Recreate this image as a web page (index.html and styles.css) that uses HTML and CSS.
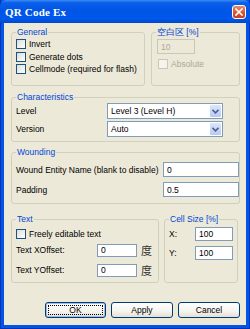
FILE: index.html
```html
<!DOCTYPE html>
<html>

<head>
    <title>QR Code Ex</title>
    <link rel="stylesheet" href="styles.css">
</head>

<body>
    <div class="window">
        <div class="titlebar">
            <span class="title">QR Code Ex</span>
            <span class="close">
                <svg width="8" height="8" viewBox="0 0 8 8">
                    <path d="M1 1L7 7M7 1L1 7" stroke="#fff" stroke-width="1.6" stroke-linecap="square" />
                </svg>
            </span>
        </div>

        <div class="client">
            <div class="row-top">
                <fieldset class="group general">
                    <legend>General</legend>
                    <label class="check"><span class="box"></span>Invert</label>
                    <label class="check"><span class="box"></span>Generate dots</label>
                    <label class="check"><span class="box"></span>Cellmode (required for flash)</label>
                </fieldset>

                <fieldset class="group margin">
                    <legend>空白区 [%]</legend>
                    <input class="field field-disabled" type="text" value="10" disabled>
                    <label class="check check-disabled"><span class="box"></span>Absolute</label>
                </fieldset>
            </div>

            <fieldset class="group chars">
                <legend>Characteristics</legend>
                <span class="lbl">Level</span>
                <div class="select">
                    <span>Level 3 (Level H)</span>
                    <span class="arrow"><svg width="7" height="5" viewBox="0 0 7 5"><path d="M0.5 0.8L3.5 3.8L6.5 0.8" fill="none" stroke="#4D6185" stroke-width="1.6" /></svg></span>
                </div>
                <span class="lbl">Version</span>
                <div class="select">
                    <span>Auto</span>
                    <span class="arrow"><svg width="7" height="5" viewBox="0 0 7 5"><path d="M0.5 0.8L3.5 3.8L6.5 0.8" fill="none" stroke="#4D6185" stroke-width="1.6" /></svg></span>
                </div>
            </fieldset>

            <fieldset class="group wounding">
                <legend>Wounding</legend>
                <span class="lbl">Wound Entity Name (blank to disable)</span>
                <input class="field" type="text" value="0">
                <span class="lbl">Padding</span>
                <input class="field" type="text" value="0.5">
            </fieldset>

            <div class="row-bottom">
                <fieldset class="group text">
                    <legend>Text</legend>
                    <label class="check"><span class="box"></span>Freely editable text</label>
                    <div class="offsets">
                        <span class="lbl">Text XOffset:</span>
                        <input class="field" type="text" value="0">
                        <span class="unit">度</span>
                        <span class="lbl">Text YOffset:</span>
                        <input class="field" type="text" value="0">
                        <span class="unit">度</span>
                    </div>
                </fieldset>

                <fieldset class="group cell">
                    <legend>Cell Size [%]</legend>
                    <span class="lbl">X:</span>
                    <input class="field" type="text" value="100">
                    <span class="lbl">Y:</span>
                    <input class="field" type="text" value="100">
                </fieldset>
            </div>

            <div class="buttons">
                <button class="btn btn-default">OK</button>
                <button class="btn">Apply</button>
                <button class="btn">Cancel</button>
            </div>
        </div>
    </div>
</body>

</html>
```

FILE: styles.css
```css
body {
    margin: 0;
    font-family: "Liberation Sans", Arial, sans-serif;
    font-size: 8.5px;
    background: #fff;
}

.window {
    width: 250px;
    height: 329px;
    box-sizing: border-box;
    background: #0055E5;
    border: 1px solid #0831B5;
    border-top: none;
    display: flex;
    flex-direction: column;
}

.titlebar {
    height: 23px;
    margin: 0 -1px;
    display: flex;
    align-items: center;
    justify-content: space-between;
    padding: 0 4px 0 5px;
    background: linear-gradient(to bottom, #3D8CF5 0, #0A5FEA 12%, #0055E5 45%, #0058EC 80%, #0048D0 100%);
    border-radius: 6px 6px 0 0;
}

.title {
    font-family: "Liberation Serif", "Times New Roman", serif;
    font-weight: bold;
    font-size: 11px;
    color: #fff;
    letter-spacing: 0.2px;
}

.close {
    width: 14px;
    height: 14px;
    box-sizing: border-box;
    display: flex;
    align-items: center;
    justify-content: center;
    background: linear-gradient(to bottom, #E98A6C, #D9512B 60%, #C94020);
    border: 1px solid #fff;
    border-radius: 3px;
}

.client {
    flex: 1;
    margin: 0 3px 3px;
    background: #ECE9D8;
    padding: 4px 6px 0 7px;
    display: flex;
    flex-direction: column;
}

.group {
    margin: 0;
    padding: 0 4px 0 4px;
    border: 1px solid #D0D0BF;
    border-radius: 3px;
    min-width: 0;
    box-sizing: border-box;
}

.group legend {
    padding: 0 1px;
    color: #0046D5;
    line-height: 11px;
}

.lbl {
    color: #000;
    white-space: nowrap;
}

.check {
    display: flex;
    align-items: center;
    height: 12.5px;
    white-space: nowrap;
}

.box {
    width: 10px;
    height: 10px;
    box-sizing: border-box;
    border: 1px solid #1C5180;
    background: linear-gradient(135deg, #DCDCD7, #fff);
    margin-right: 3px;
    flex-shrink: 0;
}

.check-disabled {
    color: #ACA899;
}

.check-disabled .box {
    border-color: #CAC8BB;
    background: #F5F4EA;
}

.field {
    margin: 0;
    box-sizing: border-box;
    border: 1px solid #7F9DB9;
    background: #fff;
    font-family: inherit;
    font-size: 8.5px;
    color: #000;
    padding: 0 3px;
    height: 15px;
    outline: none;
}

.field-disabled {
    background: #ECE9D8;
    border-color: #C9C7BA;
    color: #ACA899;
}

/* top row */
.row-top {
    display: flex;
    gap: 6px;
}

.general {
    width: 134px;
    height: 59px;
}

.margin {
    width: 89px;
    height: 59px;
    display: flex;
    flex-direction: column;
}

.margin .field {
    width: 38px;
    margin-top: 1px;
    margin-left: 1px;
}

.margin .check {
    margin-top: 4px;
    margin-left: 2px;
}

/* characteristics */
.chars {
    margin-top: 6px;
    height: 50px;
    display: grid;
    grid-template-columns: 91px 116px;
    grid-auto-rows: 16px;
    row-gap: 2px;
    align-items: center;
}

.select {
    height: 16px;
    box-sizing: border-box;
    border: 1px solid #7F9DB9;
    background: #fff;
    display: flex;
    align-items: center;
    justify-content: space-between;
    padding-left: 3px;
}

.arrow {
    width: 11px;
    height: 12px;
    margin-right: 1px;
    display: flex;
    align-items: center;
    justify-content: center;
    background: linear-gradient(to bottom, #DCE6FD, #B7CAF5);
    border-radius: 1px;
}

/* wounding */
.wounding {
    margin-top: 5px;
    height: 57px;
    display: grid;
    grid-template-columns: 147px 76px;
    grid-auto-rows: 15px;
    row-gap: 5px;
    align-items: center;
    padding-top: 4px;
}

/* bottom row */
.row-bottom {
    display: flex;
    gap: 5px;
    margin-top: 10px;
}

.text {
    width: 148px;
    height: 69px;
}

.text .check {
    margin-top: 3px;
}

.offsets {
    display: grid;
    grid-template-columns: 77px 40px 14px;
    column-gap: 4px;
    grid-auto-rows: 13px;
    row-gap: 7px;
    align-items: center;
    margin-top: 3px;
}

.offsets .field {
    height: 13px;
    width: 40px;
}

.unit {
    font-family: "Noto Sans CJK SC", sans-serif;
    font-size: 11px;
    line-height: 13px;
    color: #333;
}

.cell {
    width: 74px;
    height: 69px;
    display: grid;
    grid-template-columns: 26px 38px;
    grid-auto-rows: 14px;
    row-gap: 5px;
    align-content: start;
    align-items: center;
    padding-top: 2px;
}

.cell .field {
    height: 14px;
}

/* buttons */
.buttons {
    display: flex;
    justify-content: flex-end;
    gap: 5px;
    margin-top: 19px;
}

.btn {
    width: 62px;
    height: 16px;
    padding: 0;
    font-family: inherit;
    font-size: 8.5px;
    color: #000;
    border: 1px solid #003C74;
    border-radius: 3px;
    background: linear-gradient(to bottom, #FFFFFF, #F4F3EE 60%, #E3E0D3);
}

.btn-default {
    width: 61px;
    box-shadow: inset 0 0 0 1px #A6BCEC;
    outline: 1px dotted #000;
    outline-offset: -4px;
}
```
